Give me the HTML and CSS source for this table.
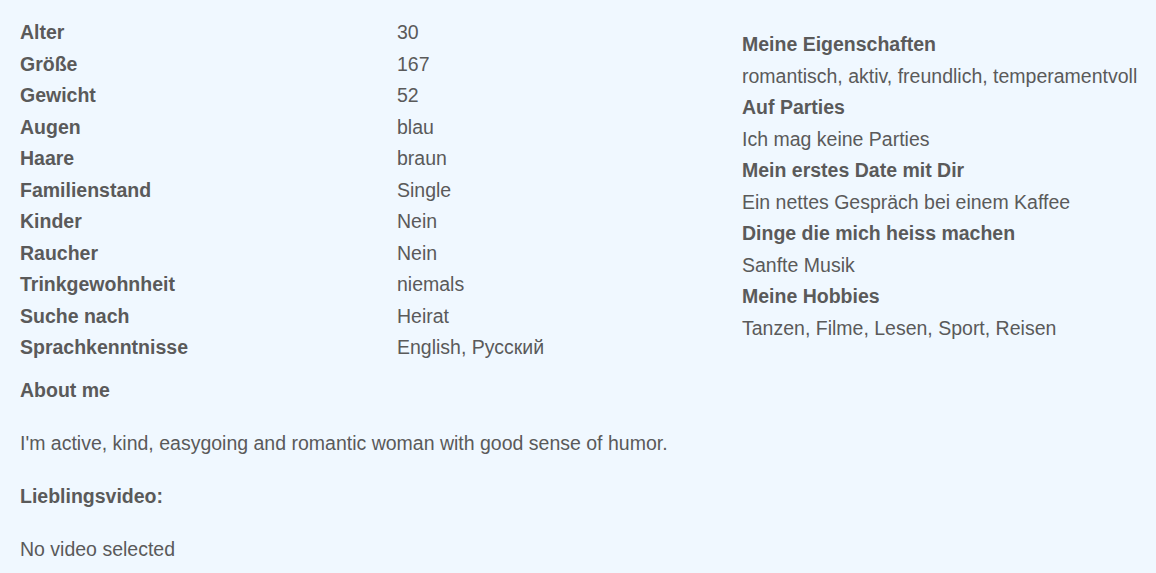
FILE: index.html
```html
<!DOCTYPE html>
<html lang="de">
<head>
<meta charset="utf-8">
<title>Profil</title>
<link rel="stylesheet" href="styles.css">
</head>
<body>
<div class="page">
  <div class="left">
    <dl class="facts">
      <dt>Alter</dt><dd>30</dd>
      <dt>Größe</dt><dd>167</dd>
      <dt>Gewicht</dt><dd>52</dd>
      <dt>Augen</dt><dd>blau</dd>
      <dt>Haare</dt><dd>braun</dd>
      <dt>Familienstand</dt><dd>Single</dd>
      <dt>Kinder</dt><dd>Nein</dd>
      <dt>Raucher</dt><dd>Nein</dd>
      <dt>Trinkgewohnheit</dt><dd>niemals</dd>
      <dt>Suche nach</dt><dd>Heirat</dd>
      <dt>Sprachkenntnisse</dt><dd>English, Русский</dd>
    </dl>
    <div class="about">
      <h3 class="head">About me</h3>
      <p class="text">I'm active, kind, easygoing and romantic woman with good sense of humor.</p>
      <h3 class="head">Lieblingsvideo:</h3>
      <p class="text">No video selected</p>
    </div>
  </div>
  <div class="right">
    <h3 class="head">Meine Eigenschaften</h3>
    <p class="line">romantisch, aktiv, freundlich, temperamentvoll</p>
    <h3 class="head">Auf Parties</h3>
    <p class="line">Ich mag keine Parties</p>
    <h3 class="head">Mein erstes Date mit Dir</h3>
    <p class="line">Ein nettes Gespräch bei einem Kaffee</p>
    <h3 class="head">Dinge die mich heiss machen</h3>
    <p class="line">Sanfte Musik</p>
    <h3 class="head">Meine Hobbies</h3>
    <p class="line">Tanzen, Filme, Lesen, Sport, Reisen</p>
  </div>
</div>
</body>
</html>
```
FILE: styles.css
```css
html, body {
  margin: 0;
  padding: 0;
  background: #f0f8ff;
}
body {
  font-family: "Liberation Sans", Arial, sans-serif;
  font-size: 19.5px;
  color: #5a5a5a;
  line-height: 31.5px;
}
.page {
  display: flex;
  padding: 17px 0 0 20px;
}
.left {
  width: 722px;
  flex: none;
}
.right {
  padding-top: 12px;
}
.facts {
  display: grid;
  grid-template-columns: 377px 1fr;
  margin: 0;
}
.facts dt {
  font-weight: bold;
  margin: 0;
}
.facts dd {
  margin: 0;
}
.about {
  margin-top: 11px;
}
.head {
  font-size: inherit;
  font-weight: bold;
  margin: 0;
}
.text {
  margin: 21.5px 0;
}
.line {
  margin: 0;
}
```
